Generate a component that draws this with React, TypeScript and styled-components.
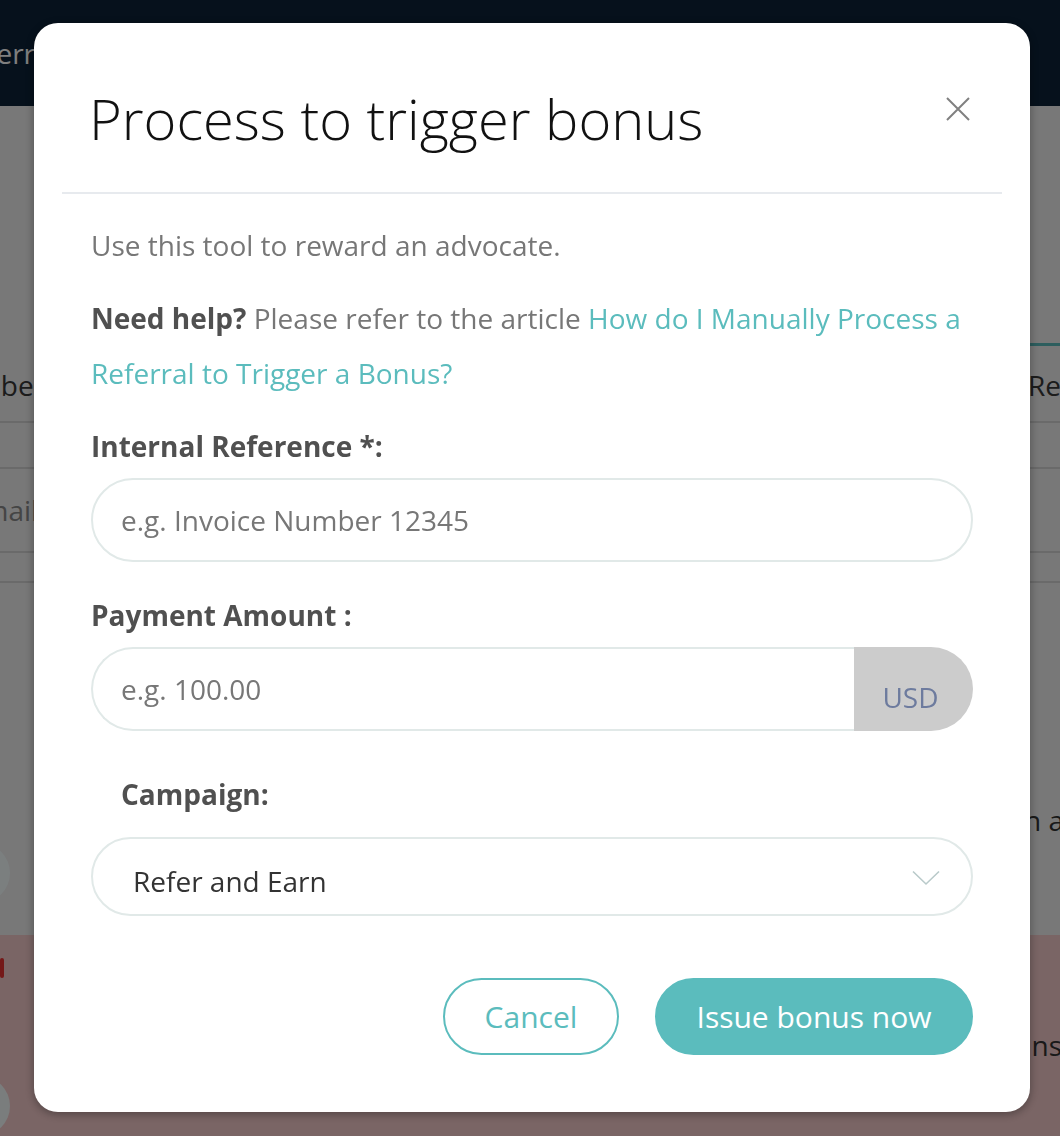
import React from 'react'
import styled, { createGlobalStyle } from 'styled-components'

const GlobalStyle = createGlobalStyle`
  html, body {
    margin: 0;
    padding: 0;
  }
  body {
    font-family: 'Open Sans', 'Liberation Sans', sans-serif;
    -webkit-font-smoothing: antialiased;
  }
  * {
    box-sizing: border-box;
  }
`

const teal = '#5bbcbd'

// ---- page behind the dialog ----

const Page = styled.div`
  width: 1060px;
  height: 1136px;
  overflow: hidden;
  background: #f0f0f0;
  display: flex;
  flex-direction: column;
`

const TopBar = styled.header`
  height: 106px;
  flex: none;
  background: #0c2238;
  display: flex;
  align-items: center;
`

const Brand = styled.span`
  margin-left: -46px;
  color: #ffffff;
  font-size: 28px;
`

const TabBar = styled.nav`
  margin-top: 237px;
  height: 80px;
  flex: none;
  display: flex;
  justify-content: space-between;
  border-bottom: 2px solid #d4d4d4;
`

const Tab = styled.div<{ $active?: boolean; $offset: number }>`
  display: flex;
  align-items: center;
  padding: 2px 20px 0 0;
  font-size: 28px;
  color: #383838;
  margin-left: ${(p) => (p.$offset < 0 ? `${p.$offset}px` : '0')};
  margin-right: ${(p) => (p.$offset > 0 ? `-${p.$offset}px` : '0')};
  border-top: 3px solid ${(p) => (p.$active ? teal : 'transparent')};
`

const Filter = styled.div`
  margin-top: 44px;
  height: 86px;
  flex: none;
  border-top: 2px solid #d4d4d4;
  border-bottom: 2px solid #d4d4d4;
  display: flex;
  align-items: center;
`

const FilterText = styled.span`
  margin-left: -33px;
  font-size: 28px;
  color: #8a8a8a;
`

const Divider = styled.div`
  margin-top: 28px;
  flex: none;
  border-top: 2px solid #d4d4d4;
`

const Panel = styled.section`
  margin-top: 220px;
  height: 132px;
  flex: none;
  display: flex;
  justify-content: space-between;
  align-items: flex-start;
`

const Bubble = styled.div<{ $tone: string }>`
  width: 60px;
  height: 60px;
  margin-left: -50px;
  margin-top: 40px;
  border-radius: 50%;
  background: ${(p) => p.$tone};
`

const EdgeText = styled.span<{ $shift: number; $top?: number }>`
  font-size: 28px;
  line-height: 40px;
  color: #333;
  margin-top: ${(p) => p.$top ?? 0}px;
  margin-right: ${(p) => p.$shift}px;
`

const Banner = styled.section`
  flex: 1;
  background: #f4caca;
  display: flex;
  justify-content: space-between;
  align-items: flex-start;
  padding-top: 23px;
`

const BannerLeft = styled.div`
  display: flex;
  flex-direction: column;
  gap: 58px;
`

const Alert = styled.span`
  width: 4px;
  height: 20px;
  background: #e83030;
  border-radius: 2px;
`

// ---- dialog ----

const Overlay = styled.div`
  position: fixed;
  inset: 0;
  background: rgba(0, 0, 0, 0.5);
  display: flex;
  align-items: flex-start;
  padding: 23px 0 0 34px;
`

const Modal = styled.div`
  width: 996px;
  height: 1089px;
  background: #fff;
  border-radius: 24px;
  box-shadow: 0 2px 10px rgba(0, 0, 0, 0.35);
  display: flex;
  flex-direction: column;
`

const Header = styled.div`
  margin: 0 28px;
  padding: 62px 29px 40px;
  border-bottom: 2px solid #e7eaee;
  display: flex;
  justify-content: space-between;
  align-items: flex-start;
`

const Title = styled.h2`
  margin: 0;
  margin-left: -2px;
  font-size: 56px;
  line-height: 67px;
  font-weight: 300;
  color: #111;
`

const Close = styled.button`
  margin-top: 9px;
  width: 30px;
  height: 30px;
  padding: 3px;
  border: none;
  background: none;
  display: flex;
  cursor: pointer;
`

const Body = styled.div`
  padding: 24px 57px 0;
  display: flex;
  flex-direction: column;
`

const Text = styled.p<{ $gap?: number }>`
  margin: ${(p) => p.$gap ?? 0}px 0 0;
  font-size: 28px;
  line-height: 55px;
  color: #777;
`

const Strong = styled.strong`
  font-weight: 700;
  color: #505050;
`

const Link = styled.a`
  color: ${teal};
  text-decoration: none;
`

const Label = styled.label<{ $gap: number; $indent?: number; $after?: number }>`
  display: block;
  margin: ${(p) => p.$gap}px 0 ${(p) => p.$after ?? 15}px;
  padding-left: ${(p) => p.$indent ?? 0}px;
  font-size: 28px;
  line-height: 34px;
  font-weight: 700;
  color: #505050;
`

const Input = styled.input`
  width: 100%;
  height: 84px;
  border: 2px solid #e1e9e8;
  border-radius: 42px;
  padding: 0 28px;
  font-family: inherit;
  font-size: 28px;
  color: #333;
  outline: none;
  background: #fff;

  &::placeholder {
    color: #777;
  }
`

const Group = styled.div`
  display: flex;
  height: 84px;
`

const GroupInput = styled(Input)`
  flex: 1;
  border-right: none;
  border-radius: 42px 0 0 42px;
`

const Addon = styled.span`
  width: 119px;
  background: #cccccc;
  border-radius: 0 42px 42px 0;
  display: flex;
  align-items: center;
  justify-content: center;
  padding: 16px 6px 0 0;
  font-size: 28px;
  color: #6d7b9e;
`

const Select = styled.div`
  height: 79px;
  border: 2px solid #e1e9e8;
  border-radius: 40px;
  padding: 8px 31px 0 40px;
  display: flex;
  align-items: center;
  justify-content: space-between;
  font-size: 28px;
  color: #333;
  cursor: pointer;

  svg {
    margin-top: -6px;
  }
`

const Footer = styled.div`
  margin-top: 62px;
  display: flex;
  justify-content: flex-end;
  gap: 36px;
`

const Button = styled.button<{ $primary?: boolean; $width: number }>`
  width: ${(p) => p.$width}px;
  height: 77px;
  border-radius: 39px;
  border: 2px solid ${teal};
  background: ${(p) => (p.$primary ? teal : '#fff')};
  color: ${(p) => (p.$primary ? '#fff' : teal)};
  font-family: inherit;
  font-size: 30px;
  cursor: pointer;
`

export default function App() {
  return (
    <>
      <GlobalStyle />
      <Page>
        <TopBar>
          <Brand>Referrals</Brand>
        </TopBar>
        <TabBar>
          <Tab $offset={-66}>Member</Tab>
          <Tab $active $offset={105}>Referrals</Tab>
        </TabBar>
        <Filter>
          <FilterText>Email</FilterText>
        </Filter>
        <Divider />
        <Panel>
          <Bubble $tone="#f6feff" />
          <EdgeText $shift={-4} $top={-3}>n a</EdgeText>
        </Panel>
        <Banner>
          <BannerLeft>
            <Alert />
            <Bubble $tone="#f4fafa" />
          </BannerLeft>
          <EdgeText $shift={-2} $top={67}>ns</EdgeText>
        </Banner>
      </Page>

      <Overlay>
        <Modal role="dialog" aria-modal="true">
          <Header>
            <Title>Process to trigger bonus</Title>
            <Close aria-label="Close">
              <svg width="24" height="24" viewBox="0 0 24 24">
                <path d="M1 1L23 23M23 1L1 23" stroke="#808080" strokeWidth="2" fill="none" />
              </svg>
            </Close>
          </Header>
          <Body>
            <Text>Use this tool to reward an advocate.</Text>
            <Text $gap={18}>
              <Strong>Need help?</Strong> Please refer to the article{' '}
              <Link href="#">How do I Manually Process a Referral to Trigger a Bonus?</Link>
            </Text>
            <Label $gap={28}>Internal Reference *:</Label>
            <Input placeholder="e.g. Invoice Number 12345" />
            <Label $gap={36}>Payment Amount :</Label>
            <Group>
              <GroupInput placeholder="e.g. 100.00" />
              <Addon>USD</Addon>
            </Group>
            <Label $gap={46} $indent={30} $after={26}>
              Campaign:
            </Label>
            <Select role="combobox">
              <span>Refer and Earn</span>
              <svg width="28" height="16" viewBox="0 0 28 16">
                <path d="M1 1.5L14 14L27 1.5" stroke="#b9caca" strokeWidth="1.6" fill="none" />
              </svg>
            </Select>
            <Footer>
              <Button $width={176}>Cancel</Button>
              <Button $primary $width={318}>Issue bonus now</Button>
            </Footer>
          </Body>
        </Modal>
      </Overlay>
    </>
  )
}
